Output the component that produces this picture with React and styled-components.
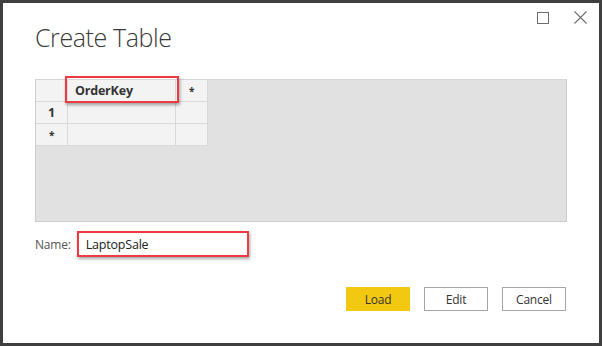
import styled, { createGlobalStyle } from "styled-components";

const GlobalStyle = createGlobalStyle`
  html, body {
    margin: 0;
    padding: 0;
    background: #ffffff;
  }
  body {
    font-family: "Open Sans", "Liberation Sans", sans-serif;
  }
`;

const Window = styled.div`
  width: 602px;
  height: 346px;
  box-sizing: border-box;
  background: #ffffff;
  border: 3px solid #3f3f3f;
  display: flex;
  flex-direction: column;
`;

const Header = styled.div`
  display: flex;
  justify-content: space-between;
  align-items: flex-start;
  padding: 0 12px 0 32px;
`;

const Title = styled.h1`
  margin: 18px 0 0 0;
  font-size: 25px;
  line-height: 32px;
  font-weight: 300;
  color: #3a3a3a;
  letter-spacing: -0.4px;
`;

const Controls = styled.div`
  display: flex;
  align-items: center;
  gap: 25px;
  margin-top: 8px;
`;

const ControlIcon = styled.svg`
  display: block;
  stroke: #6e6e6e;
  fill: none;
`;

const Panel = styled.div`
  margin: 26px 32px 0 32px;
  height: 141px;
  background: #e1e1e1;
  border: 1px solid #cdcdcd;
  border-top-color: #d6d6d6;
`;

const Grid = styled.div`
  display: grid;
  grid-template-columns: 31px 107px 31px;
  grid-auto-rows: 21px;
  gap: 1px;
  width: max-content;
  background: #d9d9d9;
  border-right: 1px solid #d9d9d9;
  border-bottom: 1px solid #d9d9d9;
`;

const Cell = styled.div`
  position: relative;
  z-index: ${(p) => (p.$highlight ? 1 : 0)};
  background: #f3f3f3;
  display: flex;
  align-items: center;
  justify-content: ${(p) => (p.$center ? "center" : "flex-start")};
  padding-left: ${(p) => (p.$center ? "0" : "7px")};
  font-size: ${(p) => (p.$star ? "10px" : "12.5px")};
  font-weight: 700;
  color: #333333;
  letter-spacing: -0.2px;

  ${(p) =>
    p.$highlight &&
    `
    &::after {
      content: "";
      position: absolute;
      left: -3px;
      right: -4px;
      top: -4px;
      bottom: -2px;
      border: 2px solid #ee3a43;
      box-shadow: 1px 2px 3px rgba(0, 0, 0, 0.35);
      pointer-events: none;
    }
  `}
`;

const NameRow = styled.div`
  display: flex;
  align-items: center;
  gap: 8px;
  margin: 9px 0 0 32px;
`;

const Label = styled.label`
  font-size: 12px;
  color: #555555;
  letter-spacing: -0.2px;
`;

const Input = styled.div`
  width: 161px;
  height: 22px;
  border: 2px solid #ee3a43;
  box-shadow: 1px 2px 3px rgba(0, 0, 0, 0.35);
  display: flex;
  align-items: center;
  padding-left: 7px;
  box-sizing: content-box;
  margin-left: -2px;
  font-size: 12.5px;
  color: #222222;
  letter-spacing: -0.2px;
`;

const Footer = styled.div`
  display: flex;
  justify-content: flex-end;
  gap: 14px;
  margin: 30px 33px 0 0;
`;

const Button = styled.button`
  width: 64px;
  height: 24px;
  box-sizing: border-box;
  font-family: inherit;
  font-size: 12px;
  color: #333333;
  background: ${(p) => (p.$primary ? "#f2c811" : "#ffffff")};
  border: ${(p) => (p.$primary ? "1px solid #f2c811" : "1px solid #a6a6a6")};
  padding: 0;
  letter-spacing: -0.2px;
`;

const rows = [
  ["", "OrderKey", "*"],
  ["1", "", ""],
  ["*", "", ""],
];

export default function App() {
  return (
    <>
      <GlobalStyle />
      <Window>
        <Header>
          <Title>Create Table</Title>
          <Controls>
            <ControlIcon width="12" height="12" viewBox="0 0 12 12">
              <rect x="0.5" y="0.5" width="11" height="11" strokeWidth="1" />
            </ControlIcon>
            <ControlIcon width="13" height="13" viewBox="0 0 13 13">
              <path d="M0.5 0.5 L12.5 12.5 M12.5 0.5 L0.5 12.5" strokeWidth="1.1" />
            </ControlIcon>
          </Controls>
        </Header>

        <Panel>
          <Grid>
            {rows.map((row, r) =>
              row.map((text, c) => (
                <Cell
                  key={`${r}-${c}`}
                  $center={c !== 1}
                  $star={text === "*"}
                  $highlight={r === 0 && c === 1}
                >
                  {text}
                </Cell>
              ))
            )}
          </Grid>
        </Panel>

        <NameRow>
          <Label>Name:</Label>
          <Input>LaptopSale</Input>
        </NameRow>

        <Footer>
          <Button $primary>Load</Button>
          <Button>Edit</Button>
          <Button>Cancel</Button>
        </Footer>
      </Window>
    </>
  );
}
